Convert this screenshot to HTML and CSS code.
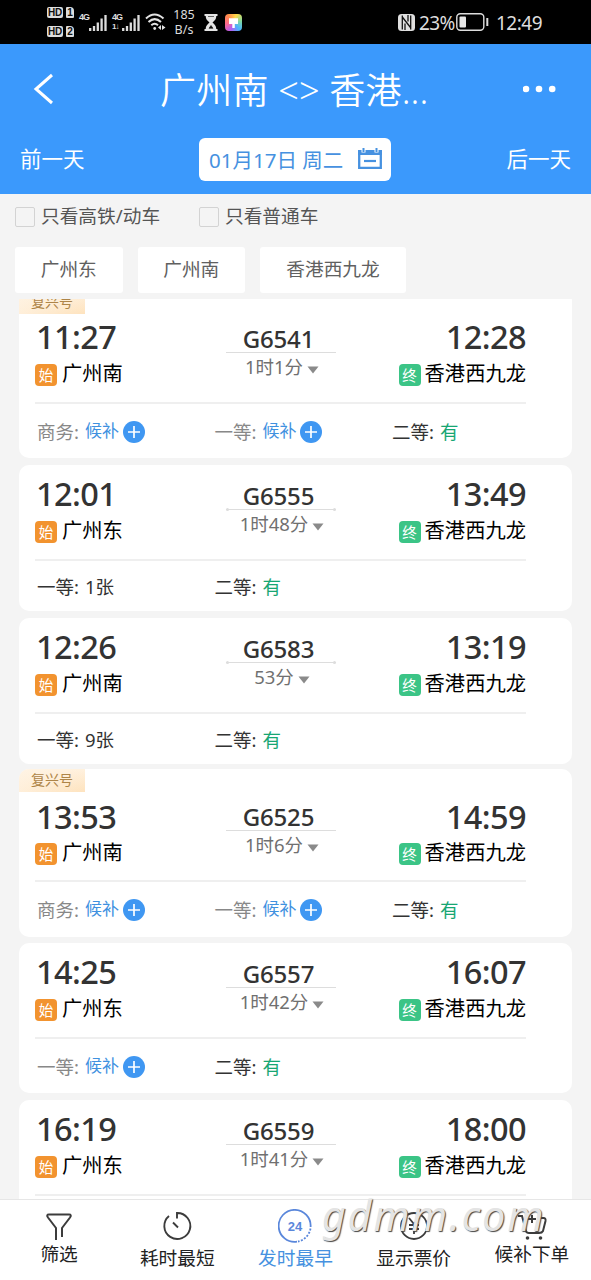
FILE: index.html
```
<!DOCTYPE html>
<html lang="zh-CN">
<head>
<meta charset="utf-8">
<title>广州南 - 香港西九龙</title>
<link rel="stylesheet" href="styles.css">
</head>
<body>
<svg class="defs" width="0" height="0">
  <symbol id="plus" viewBox="0 0 22 22"><circle cx="11" cy="11" r="11" fill="#3f97f2"/><path d="M11 5v12M5 11h12" stroke="#fff" stroke-width="1.7"/></symbol>
  <symbol id="caret" viewBox="0 0 12 8"><path d="M.5.5h11L6 7.5z" fill="#8a8a8a"/></symbol>
  <symbol id="bars" viewBox="0 0 18 16"><path d="M1.2 13v3M5 11v5M8.800 7.500v8.500M12.600 3.500v12.500M16.500 0v16" stroke="#ddd" stroke-width="2.300"/></symbol>
</svg>
<div class="screen">
  <div class="status">
    <div class="hd-col">
      <div class="hd"><b>HD</b><i>1</i></div>
      <div class="hd"><b>HD</b><i>2</i></div>
    </div>
    <div class="signal first"><span>4G</span><svg width="18" height="16"><use href="#bars"/></svg></div>
    <div class="signal"><span>4G<small>1↓</small></span><svg width="18" height="16"><use href="#bars"/></svg></div>
    <svg class="wifi" width="21" height="18" viewBox="0 0 21 18" fill="none" stroke="#e4e4e4" stroke-width="2"><path d="M1 5.500Q9.500-2.500 18.500 5.500M3.500 9Q9.700 3.200 16 9M6.300 12.300Q9.700 9.200 13 12.300"/><circle cx="9.700" cy="15.500" r="1.400" fill="#e4e4e4" stroke="none"/><path d="M16 12l-3 2.500 3 2.500zM17 12l3.500 2.500L17 17z" fill="#e4e4e4" stroke="none"/></svg>
    <div class="speed">185<br>B/s</div>
    <svg class="glass" width="14" height="17" viewBox="0 0 14 17"><path d="M.5 0h13v2h-1.200c0 3-1.500 4.500-3.800 6.500 2.300 2 3.800 3.500 3.800 6.500h1.200v2H.5v-2h1.200c0-3 1.500-4.500 3.800-6.500C3.200 6.500 1.700 5 1.700 2H.5z" fill="#e4e4e4"/><path d="M4 2.500h6M5 14.300L7 11.500l2 2.800z" stroke="#111" fill="#111" stroke-width=".6"/></svg>
    <div class="theme"><svg width="17" height="17" viewBox="0 0 17 17"><path d="M4 4.200h9V10H9.800v4H7.300v-4H4z" fill="#fff"/></svg></div>
    <svg class="nfc" width="17" height="17" viewBox="0 0 17 17"><rect width="17" height="17" rx="3.500" fill="#e0e0e0"/><path d="M4.300 1.500v14M4.300 3l8.200 10.500M12.700 15.500v-14M7 16V9.500M10 1v6.500" stroke="#111" stroke-width="1.300" fill="none"/></svg>
    <span class="pct">23%</span>
    <svg class="batt" width="33" height="18" viewBox="0 0 33 18"><rect x=".8" y=".8" width="27" height="16.400" rx="3.500" fill="none" stroke="#ddd" stroke-width="1.400"/><rect x="3.500" y="3.500" width="6.500" height="11" rx="1" fill="#e8e8e8"/><path d="M31.300 5v8" stroke="#ddd" stroke-width="2"/></svg>
    <span class="clock">12:49</span>
  </div>

  <header class="header">
    <div class="title-row">
      <svg class="back" width="21" height="32" viewBox="0 0 21 32"><path d="M19 2L3 16l16 14" fill="none" stroke="#fff" stroke-width="3"/></svg>
      <h1 class="title">广州南 &lt;&gt; 香港...</h1>
      <svg class="more" width="34" height="8" viewBox="0 0 34 8" fill="#fff"><circle cx="3" cy="4" r="3.300"/><circle cx="16" cy="4" r="3.300"/><circle cx="29.200" cy="4" r="3.300"/></svg>
    </div>
    <div class="date-row">
      <span class="day">前一天</span>
      <div class="date"><span>01月17日 周二</span>
        <svg width="24" height="22" viewBox="0 0 24 22" fill="none" stroke="#4691e0"><path d="M1.200 4.500v15.300h21.600V4.500" stroke-width="2.300"/><path d="M0 2h3.500v2.500h4V2h9v2.500h4V2H24v5H0z" fill="#4691e0" stroke="none"/><path d="M5.500 0v4M18.500 0v4" stroke-width="2"/><path d="M6 13h12" stroke-width="2.200"/></svg>
      </div>
      <span class="day">后一天</span>
    </div>
  </header>

  <div class="checks">
    <label class="check"><i></i>只看高铁/动车</label>
    <label class="check"><i></i>只看普通车</label>
  </div>
  <div class="chips"><span class="chip">广州东</span><span class="chip">广州南</span><span class="chip wide">香港西九龙</span></div>

  <main class="list">
    <article class="card fuxing scrolled">
      <span class="tag">复兴号</span>
      <div class="trip">
        <div><div class="time">11:27</div><div class="station"><i class="from">始</i>广州南</div></div>
        <div class="mid"><div class="no">G6541</div><div class="dur">1时1分<svg width="12" height="8"><use href="#caret"/></svg></div></div>
        <div class="end"><div class="time">12:28</div><div class="station"><i class="to">终</i>香港西九龙</div></div>
      </div>
      <div class="seats wait">
        <div class="seat off">商务:<em>候补</em><svg width="22" height="22"><use href="#plus"/></svg></div>
        <div class="seat off">一等:<em>候补</em><svg width="22" height="22"><use href="#plus"/></svg></div>
        <div class="seat">二等:<b>有</b></div>
      </div>
    </article>
    <article class="card">
      <div class="trip">
        <div><div class="time">12:01</div><div class="station"><i class="from">始</i>广州东</div></div>
        <div class="mid dots"><div class="no">G6555</div><div class="dur">1时48分<svg width="12" height="8"><use href="#caret"/></svg></div></div>
        <div class="end"><div class="time">13:49</div><div class="station"><i class="to">终</i>香港西九龙</div></div>
      </div>
      <div class="seats">
        <div class="seat">一等:<span>1张</span></div>
        <div class="seat">二等:<b>有</b></div>
      </div>
    </article>
    <article class="card">
      <div class="trip">
        <div><div class="time">12:26</div><div class="station"><i class="from">始</i>广州南</div></div>
        <div class="mid dots"><div class="no">G6583</div><div class="dur">53分<svg width="12" height="8"><use href="#caret"/></svg></div></div>
        <div class="end"><div class="time">13:19</div><div class="station"><i class="to">终</i>香港西九龙</div></div>
      </div>
      <div class="seats">
        <div class="seat">一等:<span>9张</span></div>
        <div class="seat">二等:<b>有</b></div>
      </div>
    </article>
    <article class="card fuxing settled">
      <span class="tag">复兴号</span>
      <div class="trip">
        <div><div class="time">13:53</div><div class="station"><i class="from">始</i>广州南</div></div>
        <div class="mid"><div class="no">G6525</div><div class="dur">1时6分<svg width="12" height="8"><use href="#caret"/></svg></div></div>
        <div class="end"><div class="time">14:59</div><div class="station"><i class="to">终</i>香港西九龙</div></div>
      </div>
      <div class="seats wait">
        <div class="seat off">商务:<em>候补</em><svg width="22" height="22"><use href="#plus"/></svg></div>
        <div class="seat off">一等:<em>候补</em><svg width="22" height="22"><use href="#plus"/></svg></div>
        <div class="seat">二等:<b>有</b></div>
      </div>
    </article>
    <article class="card">
      <div class="trip">
        <div><div class="time">14:25</div><div class="station"><i class="from">始</i>广州东</div></div>
        <div class="mid"><div class="no">G6557</div><div class="dur">1时42分<svg width="12" height="8"><use href="#caret"/></svg></div></div>
        <div class="end"><div class="time">16:07</div><div class="station"><i class="to">终</i>香港西九龙</div></div>
      </div>
      <div class="seats wait">
        <div class="seat off">一等:<em>候补</em><svg width="22" height="22"><use href="#plus"/></svg></div>
        <div class="seat">二等:<b>有</b></div>
      </div>
    </article>
    <article class="card">
      <div class="trip">
        <div><div class="time">16:19</div><div class="station"><i class="from">始</i>广州东</div></div>
        <div class="mid"><div class="no">G6559</div><div class="dur">1时41分<svg width="12" height="8"><use href="#caret"/></svg></div></div>
        <div class="end"><div class="time">18:00</div><div class="station"><i class="to">终</i>香港西九龙</div></div>
      </div>
      <div class="seats"></div>
    </article>
  </main>

  <nav class="tabs">
    <div class="tab short"><svg width="34" height="34" viewBox="0 0 34 34" fill="none" stroke="#3c3c3c" stroke-width="2"><path d="M14 31V19L6 8.500Q4 5.500 7 5.500h20q3 0 1 3L20 19v9"/></svg><span>筛选</span></div>
    <div class="tab"><svg width="34" height="34" viewBox="0 0 34 34" fill="none" stroke="#3c3c3c" stroke-width="1.900"><path d="M17 9.500V4A13 13 0 1 1 9 7M13 13.500l5 5"/></svg><span>耗时最短</span></div>
    <div class="tab active"><svg width="34" height="34" viewBox="0 0 34 34" fill="none" stroke="#5a87db" stroke-width="1.800"><path d="M19 32.700A16 16 0 1 1 32.600 18"/><path d="M32.500 19.500A16 16 0 0 1 20 32.500" stroke-dasharray="2 1.500"/><text x="17" y="21.500" text-anchor="middle">24</text></svg><span>发时最早</span></div>
    <div class="tab"><svg width="34" height="34" viewBox="0 0 34 34" fill="none" stroke="#3c3c3c" stroke-width="1.800"><circle cx="17" cy="17" r="13"/><path d="M12 9l5 6 5-6M17 15v10M12 16h10M12 20h10"/></svg><span>显示票价</span></div>
    <div class="tab short"><svg width="34" height="34" viewBox="0 0 34 34" fill="none" stroke="#3c3c3c" stroke-width="2"><path d="M3 7h4l4 15q.500 2 3 2h10q3 0 4-2l2.500-10q.500-3-2-3h-5M13 10h8M17 6v8"/><g fill="#3c3c3c" stroke="none"><circle cx="12.500" cy="29" r="1.800"/><circle cx="25.500" cy="29" r="1.800"/></g></svg><span>候补下单</span></div>
  </nav>
  <div class="watermark">gdmm.com</div>
</div>
</body>
</html>
```
FILE: styles.css
```
* { box-sizing: border-box; }
body { margin: 0; background: #f4f4f4; font-family: "Noto Sans", "Noto Sans CJK SC", sans-serif; }
i, em { font-style: normal; }
svg { display: block; flex: none; }
.defs { position: absolute; }
.screen { position: relative; width: 591px; height: 1280px; overflow: hidden; display: flex; flex-direction: column; }

.status { height: 44px; flex: none; background: #000; color: #ddd; display: flex; align-items: center; padding-left: 47px; }
.hd-col { display: flex; flex-direction: column; gap: 8px; width: 32px; }
.hd { display: flex; gap: 3px; font: bold 10px/11px "Liberation Sans", sans-serif; color: #111; }
.hd b { width: 16px; height: 11px; border-radius: 2px; background: #ddd; text-align: center; letter-spacing: -.3px; }
.hd i { width: 8px; height: 11px; border-radius: 1px 4px 1px 1px; background: #ddd; text-align: center; }
.signal { display: flex; align-items: flex-end; width: 33px; height: 18px; color: #ddd; }
.signal span { width: 10px; height: 18px; font: bold 9px/9px "Liberation Sans", sans-serif; letter-spacing: -1px; }
.signal small { display: block; font-size: 8px; line-height: 9px; }
.speed { width: 28px; margin-left: 4px; font-size: 12.500px; line-height: 15px; text-align: center; }
.glass { margin: 1px 0 0 6px; }
.theme { width: 17px; height: 17px; margin: 1px 0 0 7px; border-radius: 4px; background: conic-gradient(from 200deg, #b45cf0, #ff6a8d, #ff8b4d, #ffd947, #7fd8a0, #4ab4ff, #b45cf0); }
.nfc { margin-left: 156px; }
.pct { width: 38px; margin-left: 4px; font-size: 19px; line-height: 24px; letter-spacing: -.6px; margin-top: 2px; }
.batt { margin-left: -1px; }
.clock { margin: 2px 0 0 7px; font-size: 19px; line-height: 24px; letter-spacing: -.5px; }

.header { height: 150px; flex: none; background: #3b99fc; color: #fff; }
.title-row { height: 90px; display: flex; align-items: center; padding: 0 34px 0 33px; }
.title { width: 272px; margin: 3px 0 0 106px; font-size: 36px; line-height: 50px; font-weight: 350; letter-spacing: .2px; white-space: nowrap; }
.more { margin-left: auto; }
.date-row { height: 60px; display: flex; justify-content: space-between; align-items: flex-start; padding: 4px 20px 0; }
.day { font-size: 21.500px; line-height: 42px; }
.date { width: 192px; height: 43px; margin-right: 1px; border-radius: 6px; background: #fff; color: #4691e0; display: flex; align-items: center; justify-content: space-between; padding: 0 9px 2px 10px; font-size: 20.500px; white-space: nowrap; }

.checks { display: flex; height: 53px; padding: 8px 15px 0; color: #555; font-size: 18.700px; line-height: 27px; }
.check { display: flex; width: 184px; height: 28px; }
.check i { width: 20px; height: 20px; margin: 5px 6px 0 0; border: 1.500px solid #d3d3d3; border-radius: 2px; }
.chips { display: flex; gap: 15px; height: 52px; padding-left: 15px; flex: none; }
.chip { width: 107.500px; height: 46px; border-radius: 3px; background: #fff; color: #606060; font-size: 18.700px; line-height: 43px; text-align: center; }
.chip.wide { width: 146px; }

.list { height: 900px; flex: none; overflow: hidden; padding: 0 19px; }
.card { position: relative; margin-bottom: 7px; padding: 0 46px 0 16px; border-radius: 10px; background: #fff; overflow: hidden; }
.fuxing { margin-top: -2px; padding-top: 17px; }
.settled { padding-bottom: 1px; margin-bottom: 6px; }
.settled .time { margin: 10px 0 1px 1px; }
.scrolled { margin-top: -8px; }
.tag { position: absolute; left: 0; top: 0; width: 66px; height: 23px; background: linear-gradient(90deg, #fff5e8aa, transparent), linear-gradient(#fff1de, #fee3be); color: #ae8548; font-size: 14px; line-height: 22px; text-align: center; }
.trip { display: grid; grid-template-columns: 1fr 110px 1fr; height: 96px; border-bottom: 2px solid #efefef; }
.time { margin: 8px 0 3px 1px; color: #333; font-size: 32.500px; font-weight: 500; line-height: 41px; height: 40px; letter-spacing: -.6px; }
.end { display: flex; flex-direction: column; align-items: flex-end; }
.station { display: flex; align-items: center; height: 30px; color: #000; font-size: 20.300px; line-height: 30px; margin-top: -1px; }
.settled .station { margin-top: 0; }
.time + .station { padding-bottom: 0; }
.station i { width: 22px; height: 22px; margin: 3px 5px 0 0; border-radius: 4px; color: #fff; font-size: 14.500px; line-height: 22px; text-align: center; }
.station .to { margin-right: 4px; }
.from { background: #f2932f; }
.to { background: #3bc486; }
.mid { position: relative; padding-top: 18px; text-align: center; }
.no { color: #333; font-size: 24px; font-weight: 500; line-height: 26px; letter-spacing: -.2px; margin-left: -4px; }
.dur { display: flex; justify-content: center; align-items: center; gap: 4px; height: 29px; margin-top: 0; border-top: 1px solid #ddd; color: #707070; font-size: 18.500px; line-height: 28px; padding-left: 3px; }
.dur svg { margin-top: 5px; }
.dots::before, .dots::after { content: ""; position: absolute; top: 43px; width: 3px; height: 3px; border-radius: 2px; background: #ddd; }
.dots::before { left: 0; }
.dots::after { right: 0; }
.seats { display: grid; grid-template-columns: repeat(3, 177.500px); height: 50px; padding: 0 0 1px 2px; }
.wait { height: 54px; }
.seat { display: flex; align-items: center; color: #333; font-size: 18.500px; }
.seat b, .seat span { margin-left: 6px; font-weight: 400; }
.seat b { color: #17a673; }
.seat em { margin: -3px 4px 0 6px; color: #3f91df; font-size: 17px; }
.seat svg { margin-top: 2px; }
.off { color: #888; }

.tabs { display: grid; grid-template-columns: repeat(5, 1fr); height: 81px; flex: none; border-top: 1px solid #e6e6e6; background: #fff; }
.tab { display: flex; flex-direction: column; align-items: center; padding-top: 9px; color: #222; font-size: 18.700px; line-height: 28px; }
.tab.short span { margin-top: -4px; }
.tab svg { margin-bottom: 1px; }
.tab.active { color: #4691e0; }
.tab text { font: bold 13px "Liberation Sans", sans-serif; fill: #5a87db; stroke: none; }
.watermark { position: absolute; left: 322px; top: 1189px; color: #e4e4e4; font-size: 41px; font-style: italic; line-height: 52px; letter-spacing: 2px; text-shadow: 1px 1px 1px #444; white-space: nowrap; }
```
